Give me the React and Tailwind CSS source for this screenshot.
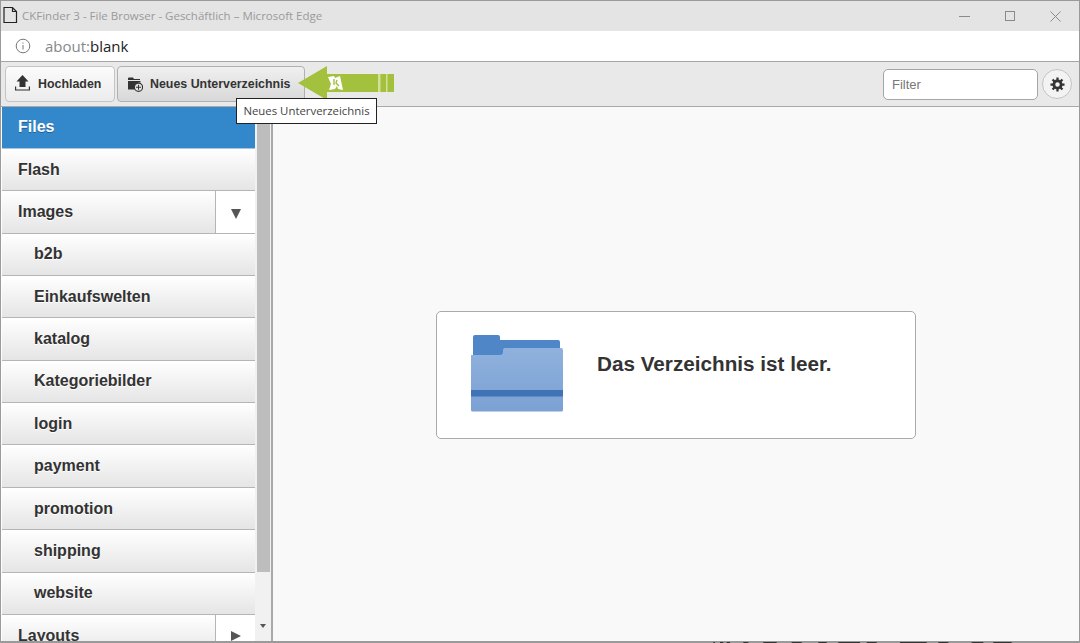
const folders = [
    { name: 'Files', active: true },
    { name: 'Flash' },
    { name: 'Images', toggle: 'down' },
    { name: 'b2b', sub: true },
    { name: 'Einkaufswelten', sub: true },
    { name: 'katalog', sub: true },
    { name: 'Kategoriebilder', sub: true },
    { name: 'login', sub: true },
    { name: 'payment', sub: true },
    { name: 'promotion', sub: true },
    { name: 'shipping', sub: true },
    { name: 'website', sub: true },
    { name: 'Layouts', toggle: 'right' },
];

// page text behind the window, only its last pixel row shows below the frame
const behindBits = [[40, 5], [60, 10], [80, 10], [130, 15], [190, 40], [275, 30], [355, 25], [415, 65], [500, 30], [600, 80], [715, 30], [815, 35], [880, 55]];

const FolderRow = ({ item }) => {
    const tone = item.active
        ? 'bg-[#3388cc] text-white border-[#a9c4dc] [text-shadow:0_1px_0_#1f5f94]'
        : 'bg-gradient-to-b from-white to-[#e5e5e5] text-[#333] border-[#b5b5b5] [text-shadow:0_1px_0_#fff]';
    return (
        <div className={`flex h-[42.37px] shrink-0 items-stretch border-b text-[16px] font-bold ${tone}`}>
            <div className={`flex flex-1 items-center ${item.sub ? 'pl-8' : 'pl-4'}`}>{item.name}</div>
            {item.toggle && (
                <div className="flex w-10 items-center justify-center border-l border-[#b5b5b5] bg-white">
                    {item.toggle === 'down' ? (
                        <div className="mt-[5px] h-0 w-0 border-x-[5px] border-t-[10px] border-x-transparent border-t-[#555]" />
                    ) : (
                        <div className="mt-[1px] h-0 w-0 border-y-[5px] border-l-[10px] border-y-transparent border-l-[#555]" />
                    )}
                </div>
            )}
        </div>
    );
};

const App = () => {
    return (
        <div className="relative h-[643px] w-[1080px] overflow-hidden bg-white font-['Liberation_Sans',Arial,sans-serif]">
            <div className="flex h-[643px] flex-col border border-[#9a9a9a] border-b-2 bg-white">
                {/* edge title bar */}
                <div className="flex h-[30px] shrink-0 items-center bg-[#e4e4e4] pl-[1px]">
                    <svg width="15" height="18" viewBox="0 0 15 18" fill="none" stroke="#222" strokeWidth="1.2" className="ml-[1px] mb-[2px]">
                        <path d="M1 1.5h8.5l4 4v11H1z M9.5 1.5v4h4" />
                    </svg>
                    <span className="ml-[4px] font-['Open_Sans',sans-serif] text-[11.5px] text-[#9a9a9a]">
                        CKFinder 3 - File Browser - Geschäftlich – Microsoft Edge
                    </span>
                    <div className="ml-auto flex items-center gap-[35px] pr-[18px]">
                        <div className="h-px w-[11px] bg-[#8a8a8a]" />
                        <div className="h-[10px] w-[10px] border border-[#8a8a8a]" />
                        <svg width="11" height="11" viewBox="0 0 11 11" stroke="#8a8a8a" strokeWidth="1">
                            <path d="M.5.5l10 10M10.5.5l-10 10" />
                        </svg>
                    </div>
                </div>

                {/* address bar */}
                <div className="flex h-[31px] shrink-0 items-center border-b border-[#a5a5a5] bg-white pl-[14px]">
                    <svg width="16" height="16" viewBox="0 0 16 16" fill="none" stroke="#777" strokeWidth="1">
                        <circle cx="8" cy="8" r="6.8" />
                        <path d="M8 7v4.5M8 4.5v1.2" />
                    </svg>
                    <span className="ml-[14px] font-['Open_Sans',sans-serif] text-[15px] text-[#888]">
                        about:<span className="text-[#222]">blank</span>
                    </span>
                </div>

                {/* toolbar */}
                <div className="flex h-[44.6px] shrink-0 items-center gap-[2px] border-b border-[#a9a9a9] bg-[#e9e9e9] pl-[4px] pr-[7px] pt-[1px]">
                    <button className="flex h-[36px] w-[110px] items-center rounded-[4px] border border-[#c4c4c4] bg-gradient-to-b from-[#fbfbfb] to-[#ececec] pl-[9px] text-[12.4px] font-bold text-[#333]">
                        <svg width="15" height="16" viewBox="0 0 15 16" fill="#333" className="mb-[2px]">
                            <path d="M7.5 0L13.500 6.500H10.500V12H4.500V6.500H1.500z" />
                            <path d="M.6 11.500v3.500h13.800v-3.500" fill="none" stroke="#333" strokeWidth="1.200" />
                        </svg>
                        <span className="ml-[8px]">Hochladen</span>
                    </button>
                    <button className="flex h-[36px] w-[188px] items-center rounded-[4px] border border-[#b0b0b0] bg-gradient-to-b from-[#f0f0f0] to-[#d8d8d8] pl-[10px] text-[12.4px] font-bold text-[#333]">
                        <svg width="15" height="15" viewBox="0 0 15 15" fill="#333">
                            <path d="M0 1.500a1 1 0 0 1 1-1h4l1 1.500h6v1H0z" />
                            <path d="M0 4h12.500v1.500a5 5 0 0 0-5.500 7H0z" />
                            <circle cx="10.500" cy="10.200" r="4.100" fill="#e4e4e4" stroke="#333" strokeWidth="1.200" />
                            <path d="M10 7.700h1v2h2v1h-2v2h-1v-2H8v-1h2z" />
                        </svg>
                        <span className="ml-[7px]">Neues Unterverzeichnis</span>
                    </button>
                    <input
                        placeholder="Filter"
                        className="ml-auto h-[31px] w-[155px] rounded-[5px] border border-[#a5a5a5] bg-white px-2 text-[13px] text-[#555] placeholder:text-[#777]"
                    />
                    <div className="ml-[2px] flex h-[30px] w-[30px] items-center justify-center rounded-full border border-[#c4c4c4] bg-[#f3f3f3]">
                        <svg width="15" height="15" viewBox="0 0 16 16" fill="none" stroke="#333">
                            <circle cx="8" cy="8" r="3.900" strokeWidth="3" />
                            <path d="M8 0.500v15M0.500 8h15M2.700 2.700l10.600 10.600M13.300 2.700L2.700 13.300" strokeWidth="2.400" strokeDasharray="3 9" />
                        </svg>
                    </div>
                </div>

                {/* main */}
                <div className="flex min-h-0 flex-1 bg-[#f9f9f9]">
                    <div className="flex w-[254px] shrink-0 flex-col overflow-hidden bg-white pl-px">
                        {folders.map((item) => (
                            <FolderRow key={item.name} item={item} />
                        ))}
                    </div>
                    <div className="w-[18px] shrink-0 border-r-2 border-[#a9a9a9] bg-[#f1f1f1] pl-[2px]">
                        <div className="h-[465px] w-[13px] bg-[#bdbdbd]" />
                        <div className="mx-auto mt-[52px] h-0 w-0 -translate-x-[1px] border-x-[3px] border-t-[4px] border-x-transparent border-t-[#555]" />
                    </div>
                    <div className="flex flex-1 items-start justify-center pt-[204.4px]">
                        <div className="flex h-[128px] w-[480px] items-center rounded-[5px] border border-[#aaa] bg-white pl-[33px]">
                            <svg width="94" height="78" viewBox="0 0 94 78" className="mb-[4px] shrink-0">
                                <defs>
                                    <linearGradient id="folderBody" x1="0" y1="0" x2="0" y2="1">
                                        <stop offset="0" stopColor="#8fb1dd" />
                                        <stop offset="1" stopColor="#7ba1d3" />
                                    </linearGradient>
                                </defs>
                                <path d="M3 3a2 2 0 0 1 2-2h23a2 2 0 0 1 2 2v3h58a2 2 0 0 1 2 2v14H3z" fill="#4f86c8" />
                                <path d="M1 21h29a3 3 0 0 0 3-3v-2a2 2 0 0 1 2-2h56a2 2 0 0 1 2 2v60a1.500 1.500 0 0 1-1.500 1.500H2.500A1.500 1.500 0 0 1 1 76z" fill="url(#folderBody)" />
                                <path d="M1 56h92v6.500H1z" fill="#3f73b5" />
                            </svg>
                            <span className="mb-[22px] ml-[33px] text-[20.7px] font-bold text-[#333]">Das Verzeichnis ist leer.</span>
                        </div>
                    </div>
                </div>
            </div>

            {/* annotation arrow over the toolbar */}
            <svg width="100" height="34" viewBox="0 0 100 34" className="absolute left-[297px] top-[66px]">
                <path d="M1 17L30 0v8h67v18H30v8z" fill="#a3c13d" />
                <path d="M81 8h2.500v18H81zM89 8h1.500v18H89z" fill="#d3e09a" />
                <path d="M31 11l6-1 1 2 5-2 3 14-5-1-1-3-2 3-6 1 2-6z" fill="#fff" />
                <path d="M37 13v6M40 14l-1 3 3 3" fill="none" stroke="#a3c13d" strokeWidth="1.400" />
            </svg>

            {/* tooltip */}
            <div className="absolute left-[236px] top-[98px] flex h-[26px] w-[141px] items-center justify-center border border-[#222] bg-white font-['Open_Sans',sans-serif] text-[11.4px] text-[#444]">
                Neues Unterverzeichnis
            </div>

            <svg width="330" height="1" className="absolute bottom-0 left-[700px]">
                {behindBits.map(([x, w]) => (
                    <rect key={x} x={x / 3} y="0" width={w / 3} height="1" fill="#333" />
                ))}
            </svg>
        </div>
    );
};

export default App;
